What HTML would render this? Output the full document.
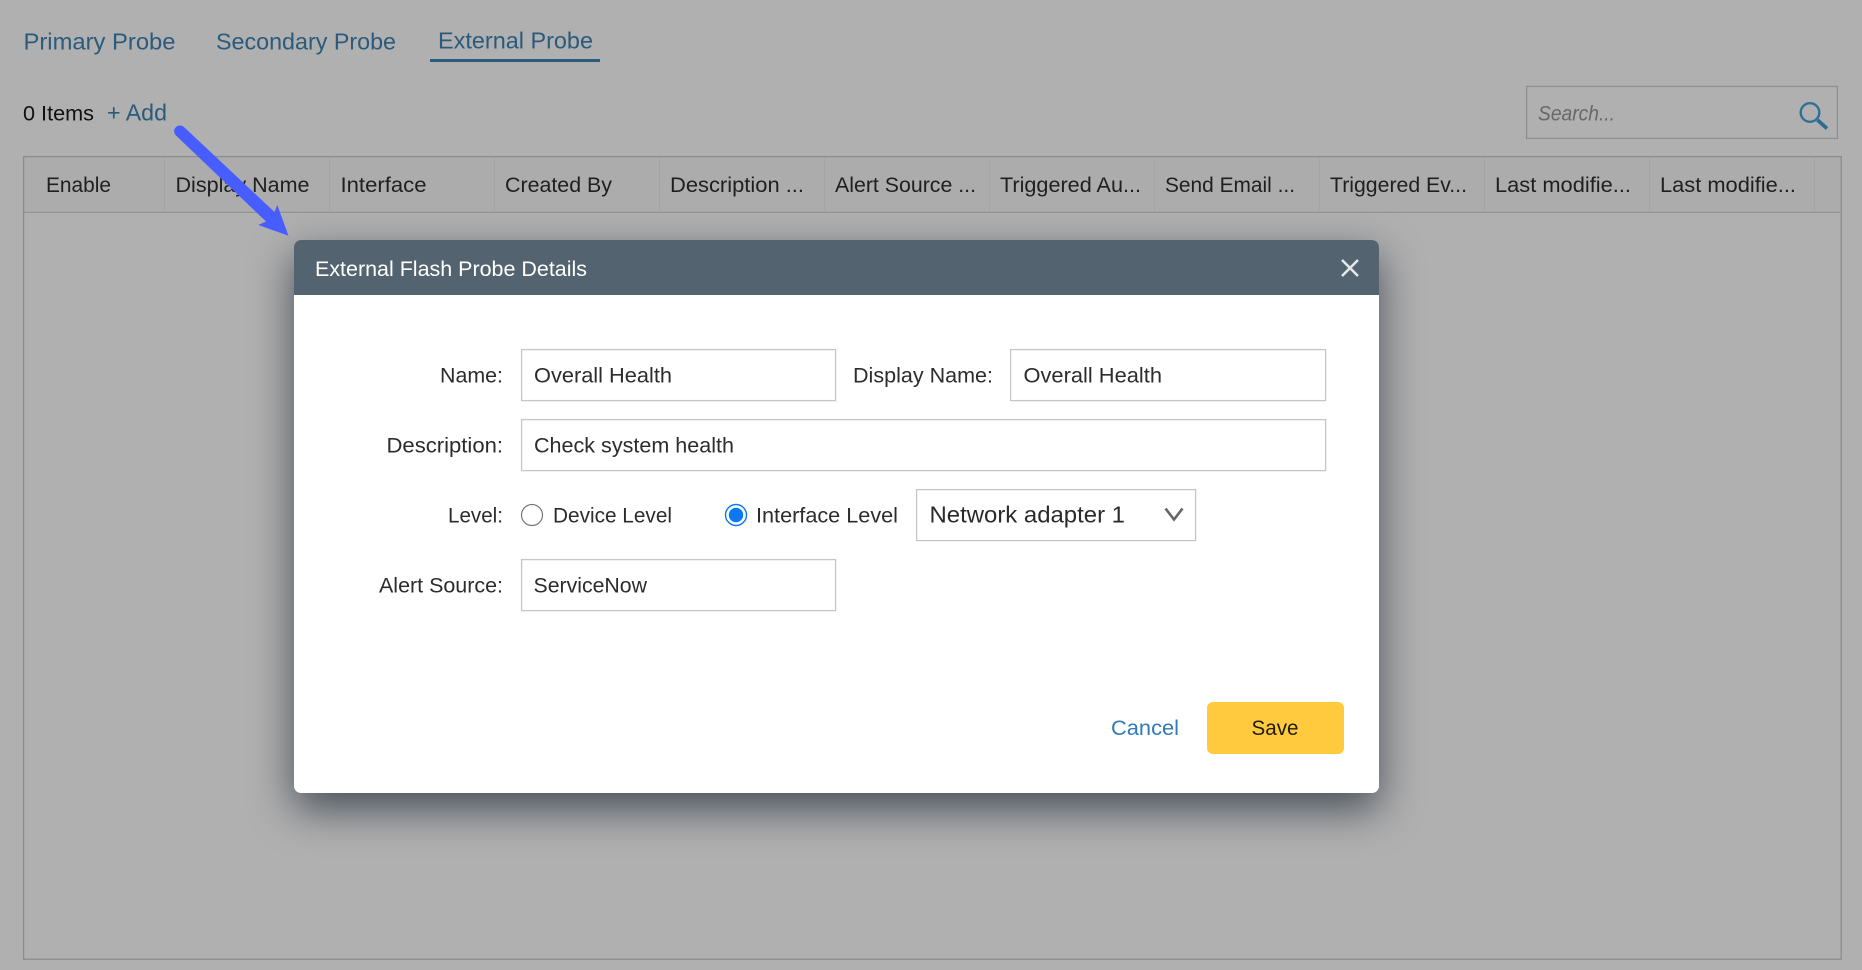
<!DOCTYPE html>
<html lang="en">
<head>
<meta charset="utf-8">
<title>External Flash Probe Details</title>
<style>
html,body{margin:0;padding:0;width:1862px;height:970px;overflow:hidden;background:#b0b0b0;}
div{position:absolute;box-sizing:border-box;}
svg{position:absolute;left:0;top:0;}
text{font-family:"Liberation Sans",sans-serif;}
.t{font-size:21px;fill:#1f1f1f;}
.tab{font-size:23px;fill:#2a5a7c;}
.m{font-size:21px;fill:#2c2c2c;}
.in{fill:#fff;stroke:#c6c6c6;stroke-width:1.3;}
.sep{width:1px;top:158px;height:53px;background:#a4a4a4;}
</style>
</head>
<body>
<div style="left:24px;top:157px;width:1816px;height:55px;background:#acacac;"></div>
<div class="sep" style="left:164px"></div>
<div class="sep" style="left:329px"></div>
<div class="sep" style="left:494px"></div>
<div class="sep" style="left:659px"></div>
<div class="sep" style="left:824px"></div>
<div class="sep" style="left:989px"></div>
<div class="sep" style="left:1154px"></div>
<div class="sep" style="left:1319px"></div>
<div class="sep" style="left:1484px"></div>
<div class="sep" style="left:1649px"></div>
<div class="sep" style="left:1814px"></div>
<div style="left:430px;top:59px;width:170px;height:3px;background:#2a5a7c;"></div>

<svg width="1862" height="970" viewBox="0 0 1862 970">
<rect x="23.6" y="156.6" width="1817.6" height="802.6" fill="none" stroke="#8c8c8c" stroke-width="1.3"/>
<path d="M24 212.4H1840" stroke="#949494" stroke-width="1.3"/>
<rect x="1526.6" y="86.4" width="310.8" height="52" fill="none" stroke="#8e8e8e" stroke-width="1.3"/>
<text class="tab" x="23.5" y="49.5" textLength="152" lengthAdjust="spacingAndGlyphs">Primary Probe</text>
<text class="tab" x="216" y="49.5" textLength="180" lengthAdjust="spacingAndGlyphs">Secondary Probe</text>
<text class="tab" x="438" y="48.7" textLength="155" lengthAdjust="spacingAndGlyphs">External Probe</text>
<text x="23" y="120.7" font-size="21" fill="#111" textLength="71" lengthAdjust="spacingAndGlyphs">0 Items</text>
<text class="tab" x="107" y="120.7" textLength="60" lengthAdjust="spacingAndGlyphs">+ Add</text>
<text x="1538" y="120.7" font-size="21" font-style="italic" fill="#686868" textLength="77" lengthAdjust="spacingAndGlyphs">Search...</text>
<circle cx="1810" cy="112.5" r="9.3" fill="none" stroke="#2f6f98" stroke-width="2.4"/>
<path d="M1817.5 120L1827 128.5" stroke="#2a6c96" stroke-width="3.8"/>
<text class="t" x="46" y="192" textLength="65" lengthAdjust="spacingAndGlyphs">Enable</text>
<text class="t" x="175.5" y="192" textLength="134" lengthAdjust="spacingAndGlyphs">Display Name</text>
<text class="t" x="340.5" y="192" textLength="86" lengthAdjust="spacingAndGlyphs">Interface</text>
<text class="t" x="505" y="192" textLength="107" lengthAdjust="spacingAndGlyphs">Created By</text>
<text class="t" x="670" y="192" textLength="134" lengthAdjust="spacingAndGlyphs">Description ...</text>
<text class="t" x="835" y="192" textLength="141" lengthAdjust="spacingAndGlyphs">Alert Source ...</text>
<text class="t" x="1000" y="192" textLength="141" lengthAdjust="spacingAndGlyphs">Triggered Au...</text>
<text class="t" x="1165" y="192" textLength="130" lengthAdjust="spacingAndGlyphs">Send Email ...</text>
<text class="t" x="1330" y="192" textLength="137" lengthAdjust="spacingAndGlyphs">Triggered Ev...</text>
<text class="t" x="1495" y="192" textLength="136" lengthAdjust="spacingAndGlyphs">Last modifie...</text>
<text class="t" x="1660" y="192" textLength="136" lengthAdjust="spacingAndGlyphs">Last modifie...</text>
</svg>

<div style="left:294px;top:240px;width:1085px;height:553px;background:#fff;border-radius:7px;box-shadow:0 16px 42px rgba(0,15,30,.6);"></div>
<div style="left:294px;top:240px;width:1085px;height:55px;background:#536470;border-radius:7px 7px 0 0;"></div>
<div style="left:1207px;top:702px;width:137px;height:52px;background:#ffca3e;border-radius:6px;"></div>

<svg width="1862" height="970" viewBox="0 0 1862 970">
<rect class="in" x="521.6" y="349.6" width="314" height="51"/>
<rect class="in" x="1010.6" y="349.6" width="315" height="51"/>
<rect class="in" x="521.6" y="419.6" width="804" height="51"/>
<rect class="in" x="916.6" y="489.6" width="279" height="51"/>
<rect class="in" x="521.6" y="559.6" width="314" height="51"/>
<text x="315" y="276" font-size="21" fill="#fff" textLength="272" lengthAdjust="spacingAndGlyphs">External Flash Probe Details</text>
<path d="M1342 260L1358 276M1358 260L1342 276" stroke="#e4e8eb" stroke-width="2.6" fill="none"/>
<text class="m" x="440" y="382.7" textLength="63" lengthAdjust="spacingAndGlyphs">Name:</text>
<text class="m" x="853" y="382.7" textLength="140" lengthAdjust="spacingAndGlyphs">Display Name:</text>
<text class="m" x="386.5" y="452.7" textLength="116.5" lengthAdjust="spacingAndGlyphs">Description:</text>
<text class="m" x="448" y="522.7" textLength="55" lengthAdjust="spacingAndGlyphs">Level:</text>
<text class="m" x="379" y="592.7" textLength="124" lengthAdjust="spacingAndGlyphs">Alert Source:</text>
<text class="m" x="534" y="382.7" textLength="138" lengthAdjust="spacingAndGlyphs">Overall Health</text>
<text class="m" x="1023.5" y="382.7" textLength="138.5" lengthAdjust="spacingAndGlyphs">Overall Health</text>
<text class="m" x="534" y="452.7" textLength="200" lengthAdjust="spacingAndGlyphs">Check system health</text>
<text class="m" x="533.5" y="592.7" textLength="113.5" lengthAdjust="spacingAndGlyphs">ServiceNow</text>
<circle cx="532" cy="515" r="10.5" fill="#fff" stroke="#767676" stroke-width="1.2"/>
<text class="m" x="553" y="522.7" textLength="119" lengthAdjust="spacingAndGlyphs">Device Level</text>
<circle cx="736" cy="515" r="10.5" fill="#fff" stroke="#0a78f5" stroke-width="1.4"/>
<circle cx="736" cy="515" r="7.2" fill="#0a78f5"/>
<text class="m" x="756" y="522.7" textLength="142" lengthAdjust="spacingAndGlyphs">Interface Level</text>
<text x="929.5" y="522.5" font-size="23" fill="#2a2a2a" textLength="195.5" lengthAdjust="spacingAndGlyphs">Network adapter 1</text>
<path d="M1165.5 508.5L1174 519.5L1182.5 508.5" fill="none" stroke="#666" stroke-width="2.6"/>
<text x="1111" y="735" font-size="21.5" fill="#2f7ab8" textLength="68" lengthAdjust="spacingAndGlyphs">Cancel</text>
<text x="1251.5" y="735" font-size="21.5" fill="#1f1a0a" textLength="47" lengthAdjust="spacingAndGlyphs">Save</text>
<path d="M184.5 127.5L274.5 212L277.3 205L288.5 235.7L258.3 225L266 221.5L176 135.5C173.5 133 173.5 129.5 175.8 127.2C178.2 124.9 182 125 184.5 127.5Z" fill="#485dff"/>
</svg>
</body>
</html>
